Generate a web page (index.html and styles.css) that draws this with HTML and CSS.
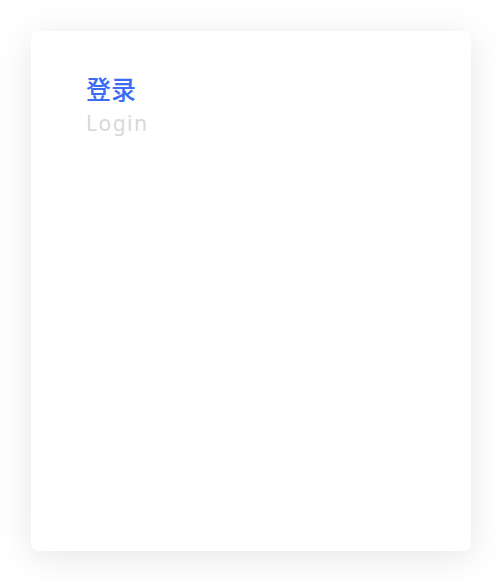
FILE: index.html
```html
<!DOCTYPE html>
<html lang="zh-CN">
<head>
    <meta charset="UTF-8">
    <title>登录</title>
    <meta name="viewport" content="width=device-width, initial-scale=1.0">
    <link rel="stylesheet" href="styles.css">
</head>
<body>
    <div class="login-card">
        <div class="login-title">登录</div>
        <div class="login-sub">Login</div>
    </div>
</body>
</html>
```

FILE: styles.css
```css
body {
    margin: 0;
    padding: 31px;
    background: #fff;
    font-family: "Noto Sans", "Noto Sans CJK SC", sans-serif;
}
.login-card {
    width: 440px;
    height: 520px;
    box-sizing: border-box;
    padding: 41px 55px;
    background: #fff;
    border-radius: 8px;
    box-shadow: 0 6px 36px rgba(0,0,0,0.1);
}
.login-title {
    font-size: 25px;
    line-height: 34px;
    font-weight: 500;
    color: #3b6cf6;
}
.login-sub {
    margin-top: 2px;
    font-size: 21px;
    line-height: 30px;
    color: #d8d8d8;
    letter-spacing: 1.5px;
}
```
